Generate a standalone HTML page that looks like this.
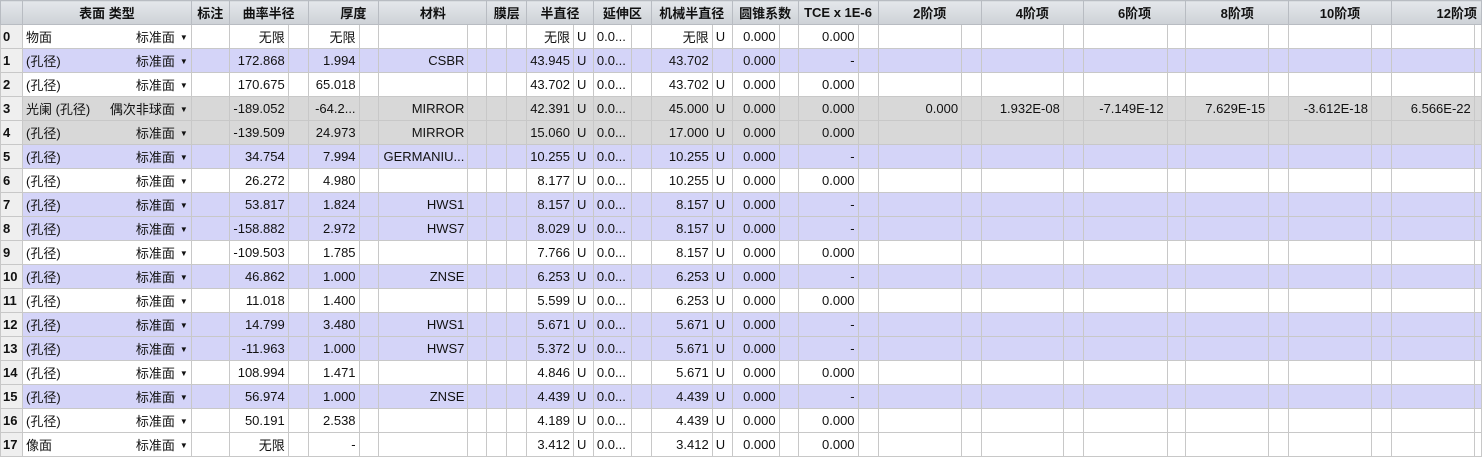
<!DOCTYPE html>
<html><head><meta charset="utf-8"><style>
body{margin:0;width:1482px;height:456px;overflow:hidden;background:#fff;font-family:"Liberation Sans","Noto Sans CJK SC",sans-serif;font-size:13px;color:#111}
table{border-collapse:collapse;table-layout:fixed;position:absolute;left:0;top:0}
td,th{height:24px;padding:0 3px;border:1px solid #c8c8c8;white-space:nowrap;overflow:hidden;box-sizing:border-box}
th{height:24px;background:linear-gradient(#e4e7eb,#cdd1d6);font-weight:bold;text-align:center;border-color:#b8bcc2;font-size:13px}
th.r{text-align:right;padding-right:12px}
td{text-align:right}
td.n{background:#efefef;font-weight:bold;text-align:left;padding-left:2px}
td.l{text-align:left}
tr.p td{background:#d4d4f8}
tr.g td{background:#d8d8d8}
tr td.n{background:#efefef}
.ty{display:flex;justify-content:space-between;align-items:center}
.ar{font-size:8px;margin-left:5px;vertical-align:middle;position:relative;top:-1px}
</style></head><body>
<table id="t">
<colgroup>
<col style="width:22px"><col style="width:169px"><col style="width:38px">
<col style="width:59px"><col style="width:20px"><col style="width:51px"><col style="width:20px">
<col style="width:89px"><col style="width:19px"><col style="width:20px"><col style="width:20px">
<col style="width:46px"><col style="width:20px"><col style="width:38px"><col style="width:20px">
<col style="width:61px"><col style="width:20px"><col style="width:47px"><col style="width:19px">
<col style="width:60px"><col style="width:20px"><col style="width:84px"><col style="width:20px">
<col style="width:82px"><col style="width:20px"><col style="width:84px"><col style="width:19px">
<col style="width:83px"><col style="width:20px"><col style="width:83px"><col style="width:20px">
<col style="width:83px"><col style="width:6px">
</colgroup>
<tr><th></th><th>表面 类型</th><th>标注</th><th colspan="2">曲率半径</th><th colspan="2" class="r">厚度</th><th colspan="2">材料</th><th colspan="2">膜层</th><th colspan="2">半直径</th><th colspan="2">延伸区</th><th colspan="2">机械半直径</th><th colspan="2">圆锥系数</th><th colspan="2">TCE x 1E-6</th><th colspan="2">2阶项</th><th colspan="2">4阶项</th><th colspan="2">6阶项</th><th colspan="2">8阶项</th><th colspan="2">10阶项</th><th colspan="2" style="text-align:right;padding-right:4px">12阶项</th></tr>
</table>
<script>
var R=[
["","物面","标准面","无限","无限","","无限","U","无限","U","0.000"],
["p"," (孔径)","标准面","172.868","1.994","CSBR","43.945","U","43.702","","-"],
["",   " (孔径)","标准面","170.675","65.018","","43.702","U","43.702","U","0.000"],
["g","光阑 (孔径)","偶次非球面","-189.052","-64.2...","MIRROR","42.391","U","45.000","U","0.000",1],
["g"," (孔径)","标准面","-139.509","24.973","MIRROR","15.060","U","17.000","U","0.000"],
["p"," (孔径)","标准面","34.754","7.994","GERMANIU...","10.255","U","10.255","U","-"],
[""," (孔径)","标准面","26.272","4.980","","8.177","U","10.255","U","0.000"],
["p"," (孔径)","标准面","53.817","1.824","HWS1","8.157","U","8.157","U","-"],
["p"," (孔径)","标准面","-158.882","2.972","HWS7","8.029","U","8.157","U","-"],
[""," (孔径)","标准面","-109.503","1.785","","7.766","U","8.157","U","0.000"],
["p"," (孔径)","标准面","46.862","1.000","ZNSE","6.253","U","6.253","U","-"],
[""," (孔径)","标准面","11.018","1.400","","5.599","U","6.253","U","0.000"],
["p"," (孔径)","标准面","14.799","3.480","HWS1","5.671","U","5.671","U","-"],
["p"," (孔径)","标准面","-11.963","1.000","HWS7","5.372","U","5.671","U","-"],
[""," (孔径)","标准面","108.994","1.471","","4.846","U","5.671","U","0.000"],
["p"," (孔径)","标准面","56.974","1.000","ZNSE","4.439","U","4.439","U","-"],
[""," (孔径)","标准面","50.191","2.538","","4.189","U","4.439","U","0.000"],
["","像面","标准面","无限","-","","3.412","U","3.412","U","0.000"]];
var A=["0.000","1.932E-08","-7.149E-12","7.629E-15","-3.612E-18","6.566E-22"];
var h="";
R.forEach(function(r,i){
 h+='<tr class="'+r[0]+'"><td class="n">'+i+'</td><td><div class="ty"><span>'+r[1]+'</span><span>'+r[2]+'<span class="ar">▼</span></span></div></td><td></td>';
 h+='<td>'+r[3]+'</td><td></td><td>'+r[4]+'</td><td></td><td>'+r[5]+'</td><td></td><td></td><td></td>';
 h+='<td>'+r[6]+'</td><td class="l">'+r[7]+'</td><td class="l">0.0...</td><td></td>';
 h+='<td>'+r[8]+'</td><td class="l">'+r[9]+'</td><td>0.000</td><td></td><td>'+r[10]+'</td><td></td>';
 for(var k=0;k<6;k++){h+='<td>'+(r[11]?A[k]:'')+'</td><td></td>';}
 h+='</tr>';
});
document.getElementById("t").insertAdjacentHTML("beforeend",h);
</script>
</body></html>
